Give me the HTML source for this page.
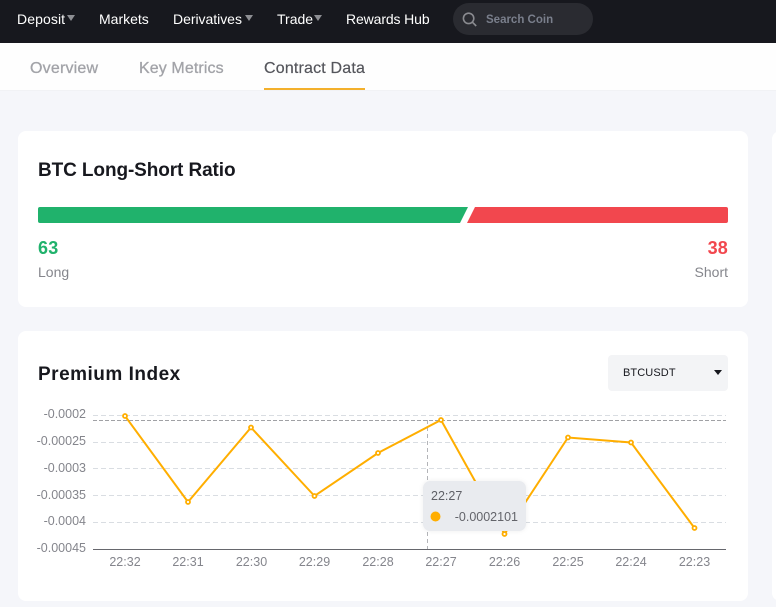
<!DOCTYPE html>
<html><head><meta charset="utf-8">
<style>
html,body{margin:0;padding:0}
body{width:776px;height:607px;overflow:hidden;position:relative;background:#f5f6fa;font-family:"Liberation Sans",sans-serif}
.a{position:absolute;white-space:nowrap}
.nav{left:0;top:0;width:776px;height:43px;background:#17181e}
.n{top:11px;font-size:14px;line-height:17px;color:#fff}
.c{top:15px;width:0;height:0;border-left:4px solid transparent;border-right:4px solid transparent;border-top:6px solid #8d8e93}
.tabs{left:0;top:43px;width:776px;height:47px;background:#fefefe;border-bottom:1px solid #f1f2f5}
.t{top:59px;font-size:16px;line-height:20px;color:#a2a3a8;font-weight:bold}
.card{background:#fff;border-radius:8px}
</style></head><body>
<div class="a nav"></div>
<div class="a n" style="left:17px;letter-spacing:.1px">Deposit</div><div class="a c" style="left:67px"></div>
<div class="a n" style="left:99px">Markets</div>
<div class="a n" style="left:173px;letter-spacing:-.03px">Derivatives</div><div class="a c" style="left:245px"></div>
<div class="a n" style="left:277px">Trade</div><div class="a c" style="left:314px"></div>
<div class="a n" style="left:346px;letter-spacing:-.12px">Rewards Hub</div>
<div class="a" style="left:453px;top:3px;width:140px;height:32px;border-radius:16px;background:#2a2b31"></div>
<svg class="a" style="left:461px;top:11px" width="18" height="18" viewBox="0 0 18 18" fill="none" stroke="#8a8b90" stroke-width="1.6"><circle cx="7.6" cy="7.4" r="5.2"/><path d="M11.4 11.2 15.2 15"/></svg>
<div class="a" style="left:486px;top:12px;font-size:11.5px;line-height:16px;font-weight:bold;color:#7a7f8c">Search Coin</div>
<div class="a tabs"></div>
<div class="a t" style="left:30px;letter-spacing:.2px;font-weight:normal;-webkit-text-stroke:.3px #a2a3a8">Overview</div>
<div class="a t" style="left:139px;letter-spacing:.1px;font-weight:normal;-webkit-text-stroke:.3px #a2a3a8">Key Metrics</div>
<div class="a t" style="left:264px;font-weight:normal;color:#55565c;-webkit-text-stroke:.2px #55565c;letter-spacing:.18px">Contract Data</div>
<div class="a" style="left:264px;top:88px;width:101px;height:2px;background:#f3b02c"></div>

<div class="a card" style="left:18px;top:131px;width:730px;height:176px"></div>
<div class="a card" style="left:772px;top:131px;width:30px;height:470px"></div>
<div class="a" style="left:38px;top:159px;font-size:19px;line-height:24px;font-weight:bold;color:#17181e;letter-spacing:-.1px">BTC Long-Short Ratio</div>
<svg class="a" style="left:38px;top:207px" width="690" height="16" viewBox="0 0 690 16">
<path d="M2 0H430L422 16H2Q0 16 0 14V2Q0 0 2 0Z" fill="#20b26c"/>
<path d="M437 0H688Q690 0 690 2V14Q690 16 688 16H429Z" fill="#f2474e"/>
</svg>
<div class="a" style="left:38px;top:237px;font-size:18px;line-height:22px;font-weight:bold;color:#20b26c;letter-spacing:.2px">63</div>
<div class="a" style="right:48px;top:237px;font-size:18px;line-height:22px;font-weight:bold;color:#f2474e;letter-spacing:.2px">38</div>
<div class="a" style="left:38px;top:264px;font-size:14px;line-height:17px;color:#85868c">Long</div>
<div class="a" style="right:48px;top:264px;font-size:14px;line-height:17px;color:#85868c">Short</div>

<div class="a card" style="left:18px;top:331px;width:730px;height:270px"></div>
<div class="a" style="left:38px;top:363px;font-size:19px;line-height:24px;font-weight:bold;color:#17181e;letter-spacing:.5px">Premium Index</div>
<div class="a" style="left:608px;top:355px;width:120px;height:36px;border-radius:4px;background:#f3f4f6"></div>
<div class="a" style="left:623px;top:366px;font-size:11px;line-height:14px;color:#17181e;letter-spacing:.1px">BTCUSDT</div>
<div class="a" style="left:714px;top:370px;width:0;height:0;border-left:4px solid transparent;border-right:4px solid transparent;border-top:5px solid #17181e"></div>

<svg class="a" style="left:0;top:400px" width="776" height="207" viewBox="0 400 776 207">
<defs><filter id="s" x="-10%" y="-20%" width="120%" height="140%"><feDropShadow dx="0" dy="0" stdDeviation="2" flood-color="#000" flood-opacity=".07"/></filter></defs>
<g stroke="#d9dde2" stroke-width="1" stroke-dasharray="5 3" fill="none">
<path d="M93 415.5H726M93 442.5H726M93 468.5H726M93 495.5H726M93 522.5H726"/>
</g>
<path d="M93 549.5H726" stroke="#66676d" stroke-width="1"/>
<path d="M93 420.5H726" stroke="#a0a1a5" stroke-width="1" stroke-dasharray="4 2" fill="none"/>
<path d="M427.5 420V549" stroke="#b3b4b8" stroke-width="1" stroke-dasharray="4 3" fill="none"/>
<polyline points="125,416 188,502 251,427.5 314.5,496 378,453 441,420 504.5,534 568,437.5 631,442.5 694.5,528" fill="none" stroke="#ffae00" stroke-width="2"/>
<g fill="#fff" stroke="#ffae00" stroke-width="1.8">
<circle cx="125" cy="416" r="2"/><circle cx="188" cy="502" r="2"/><circle cx="251" cy="427.5" r="2"/><circle cx="314.5" cy="496" r="2"/><circle cx="378" cy="453" r="2"/><circle cx="441" cy="420" r="2"/><circle cx="504.5" cy="534" r="2"/><circle cx="568" cy="437.5" r="2"/><circle cx="631" cy="442.5" r="2"/><circle cx="694.5" cy="528" r="2"/>
</g>
<g font-family="Liberation Sans, sans-serif" font-size="12.5" fill="#84858c" text-anchor="end">
<text x="86" y="418">-0.0002</text><text x="86" y="445">-0.00025</text><text x="86" y="472">-0.0003</text><text x="86" y="499">-0.00035</text><text x="86" y="525">-0.0004</text><text x="86" y="552">-0.00045</text>
</g>
<g font-family="Liberation Sans, sans-serif" font-size="12.5" fill="#84858c" text-anchor="middle">
<text x="125" y="566">22:32</text><text x="188" y="566">22:31</text><text x="251.5" y="566">22:30</text><text x="314.5" y="566">22:29</text><text x="378" y="566">22:28</text><text x="441" y="566">22:27</text><text x="504.5" y="566">22:26</text><text x="568" y="566">22:25</text><text x="631" y="566">22:24</text><text x="694.5" y="566">22:23</text>
</g>
<rect x="423" y="481" width="103" height="50" rx="7" fill="#e9ebef" filter="url(#s)"/>
<text x="431" y="500" font-family="Liberation Sans, sans-serif" font-size="12.5" fill="#5f6066">22:27</text>
<circle cx="435.5" cy="516.5" r="5" fill="#ffae00"/>
<text x="518" y="521" text-anchor="end" font-family="Liberation Sans, sans-serif" font-size="12.5" fill="#63646a">-0.0002101</text>
</svg>
</body></html>
